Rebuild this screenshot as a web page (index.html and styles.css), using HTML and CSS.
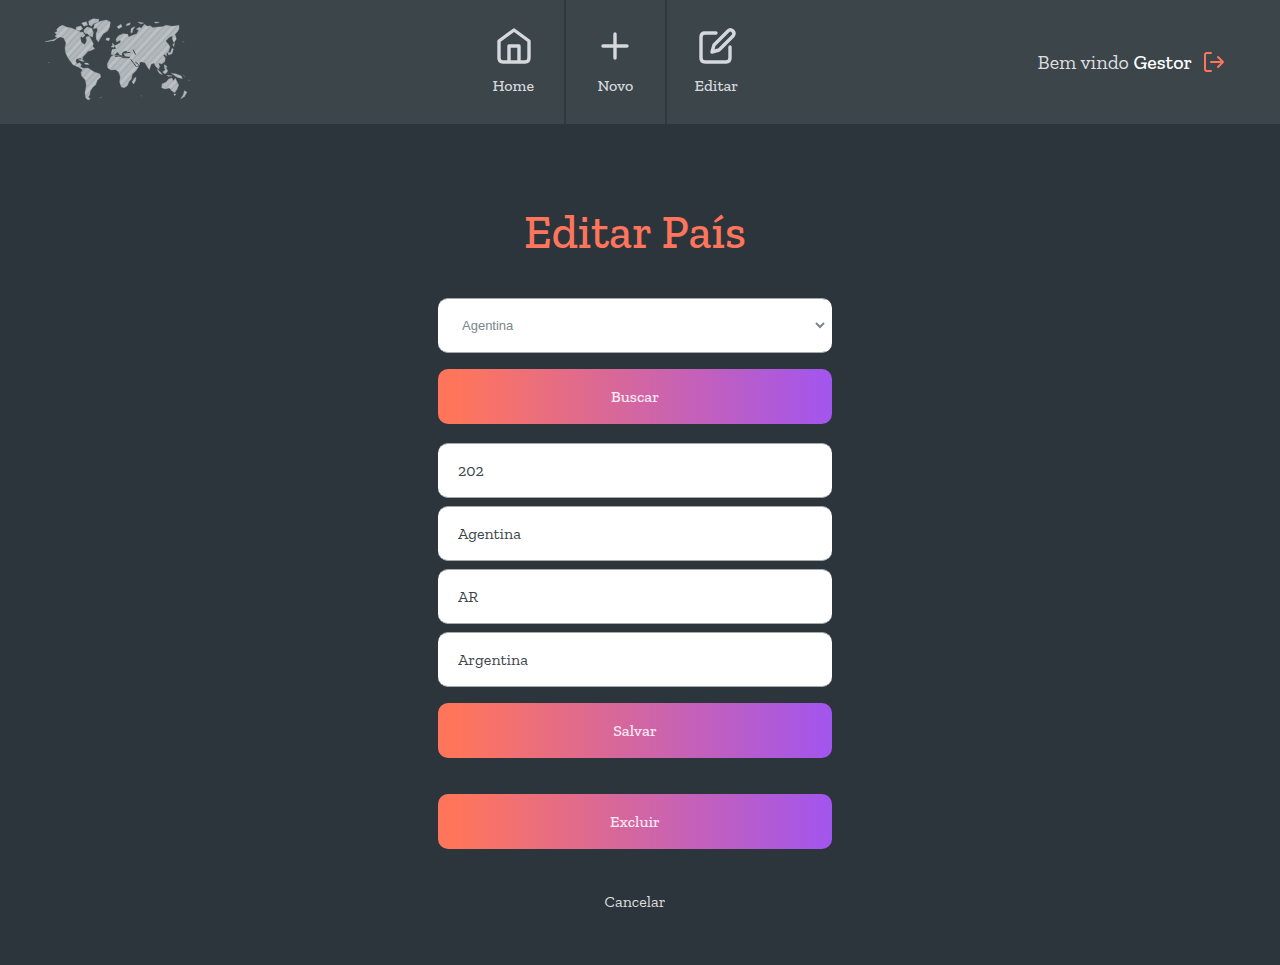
FILE: index.html
```html
<!DOCTYPE html>
<html lang="pt-BR">
<head>
<meta charset="utf-8">
<meta name="viewport" content="width=device-width, initial-scale=1">
<title>Editar País</title>
<link rel="stylesheet" href="styles.css">
</head>
<body>
<header class="topbar">
  <svg class="logo" viewBox="33 30 450 270" aria-label="Mapa-múndi" role="img">
    <defs>
      <pattern id="hatch" width="29" height="60" patternUnits="userSpaceOnUse" patternTransform="rotate(43)">
        <rect width="29" height="60" fill="#b5babe"/>
        <path d="M3 0V60M19 0V60" stroke="#969da2" stroke-width="2"/>
        <path d="M11 0V60" stroke="#cbced1" stroke-width="2"/>
        <path d="M25 0V60" stroke="#a3a9ae" stroke-width="1"/>
      </pattern>
    </defs>
    <g fill="url(#hatch)" stroke="#a9afb3" stroke-width="1" stroke-linejoin="round">
      <path d="M45 110L70 104L82 98L75 94L80 88L74 83L82 79L80 73L90 64L98 61L111 67L124 69L136 74L150 80L158 89L151 98L154 112L164 119L170 108L168 96L178 94L184 104L190 116L188 124L194 131L181 137L174 139L165 149L158 156L157 164L151 159L139 162L137 169L141 176L149 173L154 179L151 185L163 192L160 196L146 187L129 179L121 169L113 157L107 144L105 129L108 114L101 99L91 96L83 99L72 107Z"/>
      <path d="M139 66L153 63L158 71L149 77L138 75ZM155 54L169 50L173 60L162 64ZM171 66L185 70L190 82L188 96L179 93L171 84L161 82L164 73ZM176 48L189 41L207 43L205 51L191 56L184 64L177 59ZM146 84L158 81L165 91L158 98ZM162 74L175 75L179 83L166 86Z"/>
      <path d="M194 58L211 49L229 45L241 51L239 66L233 78L220 86L212 98L205 111L199 103L198 86L203 76L200 68L190 72ZM229 99L239 99L237 107L228 105Z"/>
      <path d="M145 164L155 163L163 169L156 169ZM163 174L173 174L177 179L166 178Z"/>
      <path d="M161 190L174 189L182 194L193 201L210 207L212 216L202 226L197 239L187 248L181 258L179 270L175 276L181 282L174 285L167 278L165 264L169 241L166 225L155 213L153 202Z"/>
      <path d="M243 155L250 151L269 152L282 157L299 160L307 174L315 185L326 185L318 197L307 208L304 222L297 230L292 242L283 248L274 246L269 231L271 215L266 201L257 194L242 195L233 188L232 176Z"/>
      <path d="M313 220L318 216L317 226L311 237L306 231Z"/>
      <path d="M244 142L247 133L258 132L255 122L266 116L272 112L271 105L260 111L258 102L266 92L279 86L294 88L295 96L303 93L310 90L320 87L326 76L319 72L328 67L334 70L343 58L352 64L360 62L369 68L383 66L397 65L408 61L427 64L447 61L447 72L442 80L435 88L439 102L432 113L427 103L427 92L416 98L407 108L414 116L420 125L416 139L409 146L410 154L404 148L400 151L406 160L404 170L395 177L385 174L389 184L386 193L377 184L372 174L363 178L358 194L351 184L345 173L333 170L328 173L329 179L314 187L307 177L298 163L300 155L286 154L281 146L292 142L290 137L282 139L275 145L276 151L269 149L262 141L254 149L244 149Z"/>
      <path d="M247 114L254 121L252 127L243 126L248 121ZM261 65L273 58L276 65L266 71ZM290 57L301 53L299 60L289 62ZM302 82L304 70L315 65L309 74L306 85ZM324 51L341 54L332 57ZM373 51L388 52L377 55Z"/>
      <path d="M413 142L421 143L426 130L430 132L426 146L416 150ZM428 118L434 115L431 125ZM403 179L411 184L408 190L414 199L404 191ZM381 193L392 202L397 209L388 205ZM398 201L410 191L412 201L405 207ZM411 211L426 213L414 214ZM424 205L439 207L454 213L457 221L440 216Z"/>
      <path d="M396 237L409 231L416 222L426 219L430 228L436 220L441 230L446 240L441 253L434 263L426 258L418 249L405 252L395 248ZM431 267L438 267L434 272ZM463 257L471 261L463 275L452 281L460 269Z"/>
      <path d="M54 172L59 173M460 209L464 217M456 110L463 111M208 279L216 276M332 271L336 274M475 225L480 227"/>
    </g>
    <g class="seas">
      <path d="M255 154L270 153L280 158L298 158M284 144L301 142M309 134L317 149M302 163L319 185M316 171L326 179M154 96L161 112L166 113"/>
    </g>
  </svg>

  <nav class="menu">
    <a class="menu-item" href="#">
      <svg class="menu-icon" viewBox="0 0 40 40"><path d="M21 3L36 14V31Q36 35 32 35H10Q6 35 6 31V14ZM16 35V19H26V35"/></svg>
      Home
    </a>
    <a class="menu-item" href="#">
      <svg class="menu-icon" viewBox="0 0 40 40"><path d="M20 7V31M8 19H32"/></svg>
      Novo
    </a>
    <a class="menu-item" href="#">
      <svg class="menu-icon" viewBox="0 0 40 40"><path d="M20 6H9Q5 6 5 10V31Q5 35 9 35H30Q34 35 34 31V20M32 4C35 1 40 5 37 9L23 23L16 25L18 18Z"/></svg>
      Editar
    </a>
  </nav>

  <div class="user">
    <span>Bem vindo <strong>Gestor</strong></span>
    <a class="logout" href="#" aria-label="Sair">
      <svg viewBox="0 0 22 22"><path d="M8 2H4Q2 2 2 4V18Q2 20 4 20H8M8 11H20M15 6L20 11L15 16"/></svg>
    </a>
  </div>
</header>

<main class="page">
  <h1 class="title">Editar País</h1>
  <form class="form">
    <select class="field picker" aria-label="País">
      <option>Agentina</option>
    </select>
    <button class="btn" type="button">Buscar</button>
    <div class="fields">
      <input class="field" type="text" value="202" aria-label="Código">
      <input class="field" type="text" value="Agentina" aria-label="Nome">
      <input class="field" type="text" value="AR" aria-label="Sigla">
      <input class="field" type="text" value="Argentina" aria-label="Gentílico">
    </div>
    <button class="btn" type="button">Salvar</button>
    <button class="btn btn-delete" type="button">Excluir</button>
    <a class="cancel" href="#">Cancelar</a>
  </form>
</main>
</body>
</html>
```
FILE: styles.css
```css
* {
  box-sizing: border-box;
}

body {
  margin: 0;
  min-height: 100vh;
  background: #2d353c;
  color: #dfdfdf;
  font-family: "Zilla Slab", "Liberation Serif", serif;
  font-size: 16px;
}

a {
  color: inherit;
  text-decoration: none;
}

.topbar {
  display: flex;
  justify-content: space-between;
  min-height: 124px;
  padding: 0 55px 0 41px;
  background: #3b454a;
}

.logo {
  width: 150px;
  height: 90px;
  margin-top: 15px;
}

.seas {
  fill: none;
  stroke: #3b454a;
  stroke-width: 3;
}

.menu {
  display: flex;
}

.menu-item {
  display: flex;
  flex-direction: column;
  align-items: center;
  gap: 10px;
  width: 101px;
  padding-top: 27px;
  color: #d5d8dc;
  font-weight: 500;
  line-height: 18px;
}

.menu-item + .menu-item {
  border-left: 2px solid #2f383f;
}

.menu-icon {
  width: 40px;
  height: 40px;
  overflow: visible;
  fill: none;
  stroke: currentColor;
  stroke-width: 3.4;
  stroke-linecap: round;
  stroke-linejoin: round;
}

.user {
  display: flex;
  align-items: center;
  gap: 11px;
  font-size: 20px;
}

.user strong {
  color: #fff;
  font-weight: 500;
}

.logout svg {
  display: block;
  width: 22px;
  height: 22px;
  fill: none;
  stroke: #ff755c;
  stroke-width: 2;
  stroke-linecap: round;
  stroke-linejoin: round;
}

.page {
  padding: 80px 26px 40px 16px;
}

.title {
  margin: 0 0 38px;
  color: #ff755c;
  font-size: 47px;
  font-weight: 500;
  line-height: 56px;
  text-align: center;
}

.form {
  display: flex;
  flex-direction: column;
  gap: 16px;
  max-width: 394px;
  margin: 0 auto;
}

.fields {
  display: flex;
  flex-direction: column;
  gap: 8px;
  margin-top: 3px;
}

.field {
  width: 100%;
  height: 55px;
  padding: 0 20px;
  border: 1px solid #a5a9ac;
  border-width: 1px 0;
  border-radius: 10px;
  background: #fff;
  color: #3b454b;
  font: inherit;
}

.picker {
  padding: 0 0 0 20px;
  border-right: 4px solid #fff;
  color: #7a858d;
  font-family: "Liberation Sans", Arial, sans-serif;
  font-size: 13px;
}

.btn {
  height: 55px;
  border: 0;
  border-radius: 10px;
  background: linear-gradient(90deg, #ff755c 5%, #a255ef);
  color: #fbe9f5;
  font: inherit;
  font-weight: 500;
}

.btn-delete {
  margin-top: 20px;
}

.cancel {
  align-self: center;
  margin-top: 27px;
  line-height: 20px;
}
```
